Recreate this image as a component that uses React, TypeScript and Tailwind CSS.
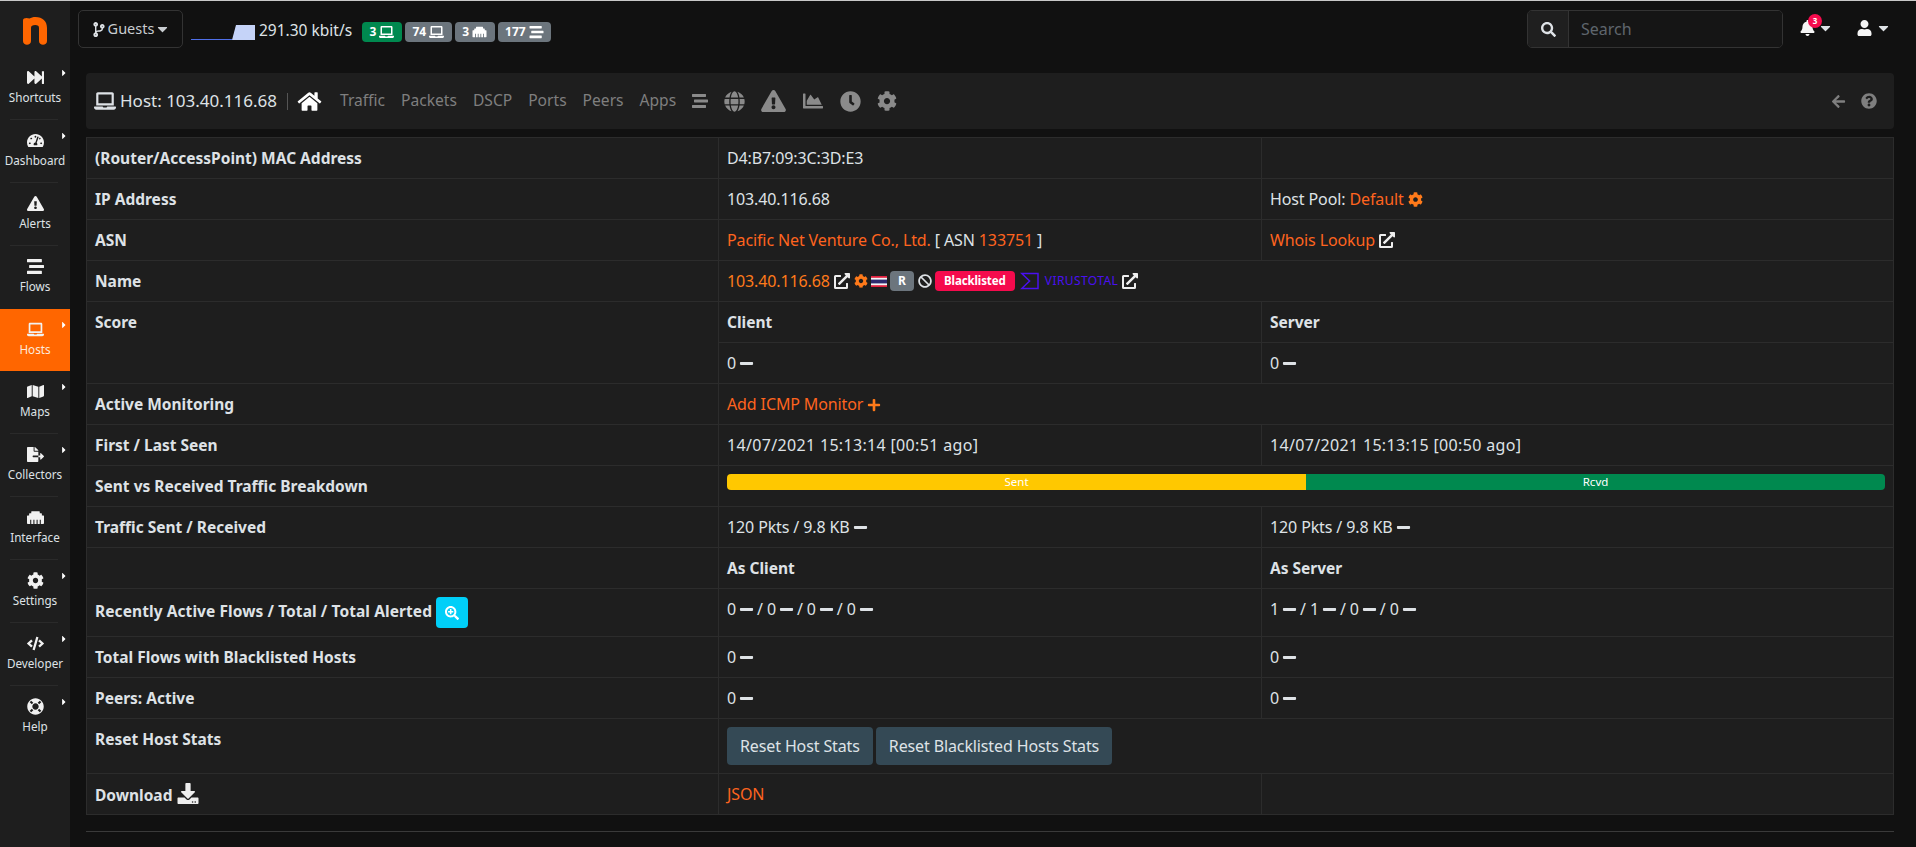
import React from "react";
import {
  FaFastForward, FaTachometerAlt, FaExclamationTriangle, FaStream, FaLaptop, FaMap, FaFileExport, FaEthernet, FaCog, FaCode, FaLifeRing,
  FaCodeBranch, FaSearch, FaBell, FaUser, FaHome, FaGlobe, FaChartArea, FaClock, FaArrowLeft, FaQuestionCircle, FaExternalLinkAlt, FaBan,
  FaMinus, FaPlus, FaSearchPlus, FaDownload, FaCaretDown, FaCaretRight,
} from "react-icons/fa";

const nav: [string, React.ComponentType<{ className?: string }>, boolean][] = [
  ["Shortcuts", FaFastForward, true],
  ["Dashboard", FaTachometerAlt, true],
  ["Alerts", FaExclamationTriangle, false],
  ["Flows", FaStream, false],
  ["Hosts", FaLaptop, true],
  ["Maps", FaMap, true],
  ["Collectors", FaFileExport, true],
  ["Interface", FaEthernet, false],
  ["Settings", FaCog, true],
  ["Developer", FaCode, true],
  ["Help", FaLifeRing, true],
];

function Side() {
  return (
    <aside className="w-[70px] shrink-0 bg-[#1e1e1e] text-[#dee2e6]">
      <div className="flex h-[56px] items-center justify-center pt-[4px]">
        <svg width="24" height="28" viewBox="0 0 24 28">
          <path d="M0 3.5C0 1 3.5 0.5 6.5 1.6C8 .6 10 0 12.5 0C19.5 0 24 4 24 11V24C24 29 16 29 16 24V11C16 8.8 14.8 8 12.2 8C9.6 8 8 8.8 8 11V24C8 29 0 29 0 24Z" fill="#ff6600" />
        </svg>
      </div>
      {nav.map(([label, Icon, caret], i) => {
        const active = label === "Hosts";
        return (
          <div key={label} className={`relative flex h-[62.9px] flex-col items-center pt-[12px] ${active ? "bg-[#ff6600] text-[#fde9dc]" : ""}`}>
            <Icon className="h-[17px] w-[17px] text-[#f1f1f1]" />
            <span className="mt-[2px] text-[11.7px] leading-[18px]">{label}</span>
            {caret && <FaCaretRight className="absolute right-[2px] top-[11px] h-[10px] w-[8px] text-white" />}
            {!active && i < nav.length - 1 && nav[i + 1][0] !== "Hosts" && (
              <div className="absolute bottom-0 left-[10px] right-[12px] h-px bg-[#2a2a2a]" />
            )}
          </div>
        );
      })}
    </aside>
  );
}

function Badge({ bg, n, Icon }: { bg: string; n: string; Icon: React.ComponentType<{ className?: string }> }) {
  return (
    <span className={`flex h-[20px] items-center gap-[3px] rounded-[4px] px-[7.5px] text-[12px] font-bold text-white ${bg}`}>
      {n}
      <Icon className="h-[14px] w-[15px]" />
    </span>
  );
}

function Top() {
  return (
    <header className="flex h-[56px] items-start pt-[9px]">
      <button className="flex h-[38px] w-[105px] items-center justify-center gap-[3px] rounded-[5px] border border-[#333] text-[14.5px] text-[#c8ccd0]">
        <FaCodeBranch className="h-[15px] w-[12px] text-[#dee2e6]" /> Guests <FaCaretDown className="h-[16px] w-[11px]" />
      </button>
      <div className="ml-[8px] mt-[14px] flex h-[16px] w-[64px] items-end">
        <svg width="64" height="16" viewBox="0 0 64 16">
          <path d="M0 15.5H41" stroke="#4f6fe8" strokeWidth="1" fill="none" />
          <path d="M41 16L45 1H64V16Z" fill="#c5d3f8" />
        </svg>
      </div>
      <span className="ml-[4px] mt-[10px] text-[15.5px] leading-[20px] text-[#dee2e6]">291.30 kbit/s</span>
      <div className="ml-[10px] mt-[12px] flex gap-[3px]">
        <Badge bg="bg-[#00894f]" n="3" Icon={FaLaptop} />
        <Badge bg="bg-[#6c757d]" n="74" Icon={FaLaptop} />
        <Badge bg="bg-[#6c757d]" n="3" Icon={FaEthernet} />
        <Badge bg="bg-[#6c757d]" n="177" Icon={FaStream} />
      </div>
      <div className="ml-auto flex h-[38px] w-[256px] overflow-hidden rounded-[5px] border border-[#333]">
        <div className="flex w-[41px] items-center justify-center border-r border-[#333] bg-[#1f1f1f]">
          <FaSearch className="h-[15px] w-[15px] text-[#dee2e6]" />
        </div>
        <input readOnly placeholder="Search" className="min-w-0 flex-1 bg-[#151515] px-[12px] text-[16px] text-[#dee2e6] outline-none placeholder:text-[#5f666d]" />
      </div>
      <div className="relative ml-[17px] mt-[10px] flex items-center">
        <FaBell className="h-[16px] w-[15px] text-[#f5f5f5]" />
        <span className="absolute left-[8px] top-[-6px] flex h-[14px] w-[14px] items-center justify-center rounded-full bg-[#f50b4d] text-[8px] font-bold text-white">3</span>
        <FaCaretDown className="ml-[5px] h-[16px] w-[11px] text-[#dee2e6]" />
      </div>
      <div className="ml-[26px] mr-[5px] mt-[10px] flex items-center">
        <FaUser className="h-[16px] w-[15px] text-[#f5f5f5]" />
        <FaCaretDown className="ml-[6px] h-[16px] w-[11px] text-[#dee2e6]" />
      </div>
    </header>
  );
}

const toolIcons = [
  [FaStream, "h-[16px] w-[16px]"],
  [FaGlobe, "h-[21px] w-[21px]"],
  [FaExclamationTriangle, "h-[22px] w-[25px]"],
  [FaChartArea, "h-[20px] w-[22px]"],
  [FaClock, "h-[21px] w-[21px]"],
  [FaCog, "h-[20px] w-[20px]"],
] as const;

function NavCard() {
  return (
    <div className="flex h-[56px] items-center rounded-[4px] bg-[#1e1e1e] pl-[8px] pr-[17px] text-[17px] text-[#dee2e6]">
      <FaLaptop className="h-[18px] w-[22px]" />
      <span className="ml-[4px]">Host: 103.40.116.68</span>
      <span className="ml-[10px] h-[17px] w-px bg-[#555]" />
      <FaHome className="ml-[9px] h-[21px] w-[25px] text-white" />
      <div className="ml-[18px] flex items-center gap-[16px] text-[15.6px] text-[#7f7f7f]">
        <span>Traffic</span><span>Packets</span><span>DSCP</span><span>Ports</span><span>Peers</span><span>Apps</span>
      </div>
      <div className="ml-[16px] flex items-center gap-[16px] text-[#8a8a8a]">
        {toolIcons.map(([I, c], i) => <I key={i} className={c} />)}
      </div>
      <FaArrowLeft className="ml-auto h-[15px] w-[15px] text-[#7f7f7f]" />
      <FaQuestionCircle className="ml-[15px] h-[16px] w-[16px] text-[#7f7f7f]" />
    </div>
  );
}

const Dash = () => <FaMinus className="mx-[3px] inline h-[15px] w-[15px] align-[-2px]" />;
const Link = ({ children }: { children: React.ReactNode }) => <span className="text-[#ff641e]">{children}</span>;
const Ext = () => <FaExternalLinkAlt className="ml-[4px] inline h-[16px] w-[16px] align-[-2px] text-[#eee]" />;

const cell = "border border-[#2c2c2c] px-[8px] align-top";
const val = `${cell} pt-[9px]`;
const head = `${cell} pt-[9px] text-left text-[15.5px] font-bold tracking-normal`;

function Row({ h, a, b, c, span }: { h: number; a?: React.ReactNode; b?: React.ReactNode; c?: React.ReactNode; span?: boolean }) {
  return (
    <tr style={{ height: h }}>
      <th className={head}>{a}</th>
      {span ? (
        <td colSpan={2} className={val}>{b}</td>
      ) : (
        <>
          <td className={val}>{b}</td>
          <td className={val}>{c}</td>
        </>
      )}
    </tr>
  );
}

function Flag() {
  return (
    <svg width="16" height="11" viewBox="0 0 16 11" className="ml-[3px] inline">
      <rect width="16" height="11" fill="#f4f5f8" />
      <rect y="0" width="16" height="1.8" fill="#e0213f" />
      <rect y="9.2" width="16" height="1.8" fill="#e0213f" />
      <rect y="3.6" width="16" height="3.8" fill="#2d2a6e" />
    </svg>
  );
}

function Table() {
  return (
    <table className="mt-[8px] w-[1808px] table-fixed border-collapse bg-[#1e1e1e] text-[16px] leading-[22px] tracking-[-0.12px] text-[#dee2e6]">
      <colgroup>
        <col className="w-[632px]" />
        <col className="w-[543px]" />
        <col />
      </colgroup>
      <tbody>
        <Row h={41} a="(Router/AccessPoint) MAC Address" b="D4:B7:09:3C:3D:E3" />
        <Row h={41} a="IP Address" b="103.40.116.68" c={<>Host Pool: <Link>Default</Link><FaCog className="ml-[4px] inline h-[15px] w-[15px] align-[-2px] text-[#ff7a1a]" /></>} />
        <Row h={41} a="ASN" b={<><Link>Pacific Net Venture Co., Ltd.</Link> [ ASN <Link>133751</Link> ]</>} c={<><Link>Whois Lookup</Link><Ext /></>} />
        <Row h={41} a="Name" span b={
          <span className="flex items-center">
            <span className="text-[#ff7a1a]">103.40.116.68</span>
            <Ext />
            <FaCog className="ml-[4px] h-[14px] w-[14px] text-[#ff7a1a]" />
            <Flag />
            <span className="ml-[3px] flex h-[20px] w-[24px] items-center justify-center rounded-[4px] bg-[#6c757d] text-[12px] font-bold text-white">R</span>
            <FaBan className="ml-[4px] h-[14px] w-[14px] text-[#dee2e6]" />
            <span className="ml-[3px] flex h-[20px] w-[80px] items-center justify-center rounded-[4px] bg-[#f50b4d] text-[11.5px] font-bold text-white">Blacklisted</span>
            <svg width="19" height="18" viewBox="0 0 19 18" className="ml-[5px]">
              <path d="M18 1.5H1.8L9.6 9L1.8 16.5H18Z" fill="none" stroke="#4a10f0" strokeWidth="1.5" />
            </svg>
            <span className="ml-[6px] text-[12px] tracking-[0.4px] text-[#4a10f0]">VIRUSTOTAL</span>
            <Ext />
          </span>
        } />
        <tr className="h-[41px]">
          <th rowSpan={2} className={head}>Score</th>
          <td className={head}>Client</td>
          <td className={head}>Server</td>
        </tr>
        <tr className="h-[41px]">
          <td className={val}>0<Dash /></td>
          <td className={val}>0<Dash /></td>
        </tr>
        <Row h={41} a="Active Monitoring" span b={<><Link>Add ICMP Monitor</Link><FaPlus className="ml-[4px] inline h-[14px] w-[14px] align-[-2px] text-[#ff7a1a]" /></>} />
        <Row h={41} a="First / Last Seen" b={<span className="tracking-[0.33px]">14/07/2021 15:13:14 [00:51 ago]</span>} c={<span className="tracking-[0.33px]">14/07/2021 15:13:15 [00:50 ago]</span>} />
        <tr className="h-[41px]">
          <th className={head}>Sent vs Received Traffic Breakdown</th>
          <td colSpan={2} className={`${cell} pt-[8px]`}>
            <div className="flex h-[16px] overflow-hidden rounded-[4px] text-center text-[11.5px] leading-[16px] tracking-normal text-white">
              <div className="w-1/2 bg-[#ffc800]">Sent</div>
              <div className="w-1/2 bg-[#00894f]">Rcvd</div>
            </div>
          </td>
        </tr>
        <Row h={41} a="Traffic Sent / Received" b={<>120 Pkts / 9.8 KB<Dash /></>} c={<>120 Pkts / 9.8 KB<Dash /></>} />
        <tr className="h-[41px]">
          <th className={cell}></th>
          <td className={head}>As Client</td>
          <td className={head}>As Server</td>
        </tr>
        <tr className="h-[48px]">
          <th className={`${cell} pt-[8px] text-left text-[15.5px] font-bold tracking-[0.08px]`}>
            Recently Active Flows / Total / Total Alerted
            <span className="ml-[4px] inline-flex h-[31px] w-[32px] items-center justify-center rounded-[4px] bg-[#00cff8] align-middle">
              <FaSearchPlus className="h-[14px] w-[14px] text-white" />
            </span>
          </th>
          <td className={val}>0<Dash />/ 0<Dash />/ 0<Dash />/ 0<Dash /></td>
          <td className={val}>1<Dash />/ 1<Dash />/ 0<Dash />/ 0<Dash /></td>
        </tr>
        <Row h={41} a="Total Flows with Blacklisted Hosts" b={<>0<Dash /></>} c={<>0<Dash /></>} />
        <Row h={41} a="Peers: Active" b={<>0<Dash /></>} c={<>0<Dash /></>} />
        <tr className="h-[55px]">
          <th className={head}>Reset Host Stats</th>
          <td colSpan={2} className={`${cell} pt-[8px]`}>
            <div className="flex gap-[3px]">
              <button className="h-[38px] rounded-[4px] bg-[#344955] px-[13px] text-[#dee2e6]">Reset Host Stats</button>
              <button className="h-[38px] rounded-[4px] bg-[#344955] px-[13px] text-[#dee2e6]">Reset Blacklisted Hosts Stats</button>
            </div>
          </td>
        </tr>
        <Row h={41} a={<>Download <FaDownload className="ml-[1px] inline h-[21px] w-[22px] align-[-3px] text-[#eee]" /></>} b={<Link>JSON</Link>} />
      </tbody>
    </table>
  );
}

export default function App() {
  return (
    <div className="flex min-h-screen overflow-hidden border-t border-[#c8c8c8] bg-[#111111] [font-family:'Noto_Sans',sans-serif]">
      <Side />
      <main className="w-[1846px] pl-[8px] pr-[22px]">
        <Top />
        <div className="ml-[8px] pt-[16px]">
          <NavCard />
          <Table />
          <hr className="mt-[16px] border-t border-[#3a3a3a]" />
        </div>
      </main>
    </div>
  );
}
